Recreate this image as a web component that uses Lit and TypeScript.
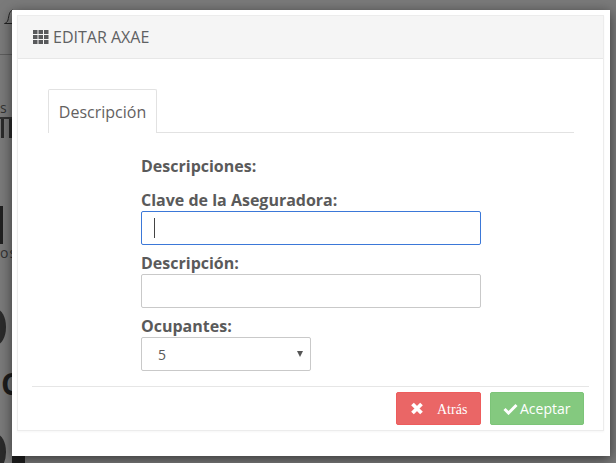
import { LitElement, html, css, svg } from "lit";
import { customElement } from "lit/decorators.js";

@customElement("app-root")
export class AppRoot extends LitElement {
  static styles = css`
    :host { display: block; width: 616px; height: 463px; position: relative; overflow: hidden; background: #7a7a7a; font-family: "Open Sans", sans-serif; color: #58595b; }
    .bg { position: absolute; color: #1c1c1c; font-family: "Open Sans", sans-serif; }
    .bell { left: 4px; top: 8px; width: 9px; height: 18px; }
    .line { left: 0; width: 14px; height: 1px; background: #5d5d5d; top: 54px; }
    .s1 { left: 0; top: 100px; font-size: 14px; line-height: 16px; color: #333; }
    .rule { left: 0; top: 117px; width: 12px; height: 2px; background: #333; }
    .bars { left: 0; top: 119px; width: 12px; height: 19px; background: linear-gradient(90deg, #777 0 1px, #2a2a2a 1px 4px, #777 4px 9px, #2a2a2a 9px 12px); }
    .block { left: 0; top: 206px; width: 3px; height: 38px; background: #202020; }
    .os { left: 0; top: 245px; font-size: 14px; line-height: 16px; color: #333; letter-spacing: 1px; }
    .c1 { left: -14px; top: 309px; width: 20px; height: 36px; border-radius: 50%; background: #2b2b2b; }
    .c2 { left: 1px; top: 366px; font-size: 30px; line-height: 36px; font-weight: 700; color: #1d1d1d; }
    .c3 { left: -14px; top: 434px; width: 20px; height: 36px; border-radius: 50%; background: #2b2b2b; }
    .dark { left: 12px; top: 456px; width: 13px; height: 7px; background: #1f1f1f; }
    .modal { position: absolute; left: 12px; top: 10px; width: 598px; height: 446px; box-sizing: border-box; padding: 5px 6px 25px 5px; background: #fff; box-shadow: 0 3px 12px rgba(0,0,0,.55); }
    .box { height: 100%; box-sizing: border-box; border: 1px solid #ececec; box-shadow: 0 1px 2px rgba(0,0,0,.04); display: flex; flex-direction: column; background: #fff; }
    .head { height: 43px; box-sizing: border-box; background: #f5f5f5; border-bottom: 1px solid #e7e7e7; display: flex; align-items: center; padding: 0 0 0 15px; gap: 4px; font-size: 16px; color: #5f6163; }
    .body { flex: 1; padding: 30px 14px 0 14px; display: flex; flex-direction: column; }
    .tabs { margin: 0 15px 0 16px; height: 43px; border-bottom: 1px solid #e2e2e2; display: flex; }
    .tab { height: 44px; box-sizing: border-box; width: 109px; border: 1px solid #e2e2e2; border-bottom: none; background: #fff; display: flex; align-items: center; justify-content: center; font-size: 16px; color: #64615f; border-radius: 2px 2px 0 0; }
    .form { margin-left: 109px; width: 340px; display: flex; flex-direction: column; padding-top: 22px; height: 253px; box-sizing: border-box; }
    label { font-weight: 700; font-size: 16px; line-height: 22px; color: #5a5a5a; display: block; }
    .h { margin-bottom: 12px; }
    .input { box-sizing: border-box; width: 340px; height: 34px; border: 1px solid #c9c9c9; border-radius: 2px; background: #fff; margin-bottom: 7px; position: relative; }
    .input.focus { border-color: #3b78d8; }
    .caret { position: absolute; left: 12px; top: 6px; width: 1px; height: 20px; background: #444; }
    .select { box-sizing: border-box; width: 170px; height: 34px; border: 1px solid #c9c9c9; border-radius: 2px; display: flex; align-items: center; justify-content: space-between; padding: 0 7px 0 16px; font-size: 14px; color: #5a5a5a; }
    .arrow { width: 0; height: 0; border-left: 3px solid transparent; border-right: 3px solid transparent; border-top: 6px solid #555; }
    .foot { border-top: 1px solid #e6e6e6; height: 44px; box-sizing: border-box; padding: 5px 5px 0 0; display: flex; justify-content: flex-end; gap: 9px; align-items: flex-start; }
    .btn { height: 33px; box-sizing: border-box; border-radius: 2px; color: #fff; display: flex; align-items: center; }
    .cancel { width: 85px; background: #ea6666; border: 1px solid #ee5c5c; padding-left: 13px; gap: 13px; font-family: "Liberation Serif", serif; font-size: 14px; }
    .atras { margin-top: 3px; }
    .ok { width: 94px; background: #84c97f; border: 1px solid #7cc478; padding-left: 12px; gap: 2px; font-size: 14px; }
  `;

  private grid() {
    const cells = [0, 5.5, 11].flatMap((x) => [0, 5, 10].map((y) => svg`<rect x=${x} y=${y} width="4.5" height="4" />`));
    return html`<svg width="16" height="14" viewBox="0 0 16 14" fill="#58595b">${cells}</svg>`;
  }

  render() {
    return html`
      <svg class="bg bell" viewBox="0 0 9 18" fill="none" stroke="#222" stroke-width="1"><path d="M9 2C5 3 5 8 4 12 3.500 14 2 15 .500 15.500H9" /></svg>
      <div class="bg line"></div>
      <div class="bg s1">s</div>
      <div class="bg rule"></div>
      <div class="bg bars"></div>
      <div class="bg block"></div>
      <div class="bg os">os</div>
      <div class="bg c1"></div>
      <div class="bg c2">C</div>
      <div class="bg c3"></div>
      <div class="bg dark"></div>
      <div class="modal">
        <div class="box">
          <div class="head">${this.grid()}<span>EDITAR AXAE</span></div>
          <div class="body">
            <div class="tabs"><div class="tab">Descripción</div></div>
            <div class="form">
              <label class="h">Descripciones:</label>
              <label>Clave de la Aseguradora:</label>
              <div class="input focus"><div class="caret"></div></div>
              <label>Descripción:</label>
              <div class="input"></div>
              <label>Ocupantes:</label>
              <div class="select"><span>5</span><span class="arrow"></span></div>
            </div>
            <div class="foot">
              <div class="btn cancel">
                <svg width="14" height="13" viewBox="0 0 14 13" fill="none" stroke="#fff" stroke-width="3.800"><path d="M2.500 2 11.500 11M11.500 2 2.500 11" /></svg>
                <span class="atras">Atrás</span>
              </div>
              <div class="btn ok">
                <svg width="15" height="12" viewBox="0 0 15 12" fill="none" stroke="#fff" stroke-width="3"><path d="M1.500 6 5.500 10 13.500 2" /></svg>
                <span>Aceptar</span>
              </div>
            </div>
          </div>
        </div>
      </div>
    `;
  }
}
